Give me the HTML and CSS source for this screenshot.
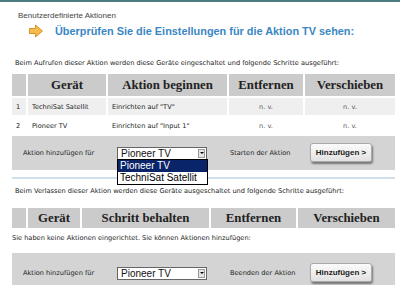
FILE: index.html
```html
<!DOCTYPE html>
<html>
<head>
<meta charset="utf-8">
<link rel="stylesheet" href="styles.css">
</head>
<body>
<div class="topline"></div>
<div class="page">
  <div class="crumb">Benutzerdefinierte Aktionen</div>
  <div class="title">
    <svg class="arrow" width="16" height="14" viewBox="0 0 16 14">
      <path d="M1.5 4.5 H7.5 V1 L14.5 7 L7.5 13 V9.5 H1.5 Z" fill="#f6bb4a" stroke="#d8922a" stroke-width="1" stroke-linejoin="round"/>
    </svg>
    <h1>Überprüfen Sie die Einstellungen für die Aktion TV sehen:</h1>
  </div>

  <p class="note first">Beim Aufrufen dieser Aktion werden diese Geräte eingeschaltet und folgende Schritte ausgeführt:</p>
  <div class="grid g1">
    <div class="hd"></div>
    <div class="hd">Gerät</div>
    <div class="hd">Aktion beginnen</div>
    <div class="hd">Entfernen</div>
    <div class="hd">Verschieben</div>

    <div class="cell odd">1</div>
    <div class="cell odd">TechniSat Satellit</div>
    <div class="cell odd">Einrichten auf "TV"</div>
    <div class="cell odd c">n. v.</div>
    <div class="cell odd c">n. v.</div>

    <div class="cell">2</div>
    <div class="cell">Pioneer TV</div>
    <div class="cell">Einrichten auf "Input 1"</div>
    <div class="cell c">n. v.</div>
    <div class="cell c">n. v.</div>
  </div>

  <div class="addbox">
    <span class="lbl">Aktion hinzufügen für</span>
    <div class="selwrap">
      <div class="select"><span>Pioneer TV</span><span class="dd"><i></i></span></div>
      <div class="list">
        <div class="opt on">Pioneer TV</div>
        <div class="opt">TechniSat Satellit</div>
      </div>
    </div>
    <span class="lbl2">Starten der Aktion</span>
    <button class="btn">Hinzufügen &gt;</button>
  </div>

  <div class="sep"></div>

  <p class="note second">Beim Verlassen dieser Aktion werden diese Geräte ausgeschaltet und folgende Schritte ausgeführt:</p>
  <div class="grid g2">
    <div class="hd"></div>
    <div class="hd">Gerät</div>
    <div class="hd">Schritt behalten</div>
    <div class="hd">Entfernen</div>
    <div class="hd">Verschieben</div>
  </div>
  <p class="note empty">Sie haben keine Aktionen eingerichtet. Sie können Aktionen hinzufügen:</p>

  <div class="addbox b2">
    <span class="lbl">Aktion hinzufügen für</span>
    <div class="selwrap">
      <div class="select"><span>Pioneer TV</span><span class="dd"><i></i></span></div>
    </div>
    <span class="lbl2">Beenden der Aktion</span>
    <button class="btn">Hinzufügen &gt;</button>
  </div>
</div>
</body>
</html>
```

FILE: styles.css
```css
html, body {
  margin: 0;
  padding: 0;
  background: #fff;
  overflow: hidden;
}
body {
  width: 400px;
  height: 285px;
  font-family: "Liberation Sans", Arial, sans-serif;
  color: #222;
}
.topline {
  height: 2px;
  background: #4d7c82;
}
.page {
  padding: 0 5px 0 12px;
}
.crumb {
  margin: 9px 0 0 6px;
  font-size: 8px;
  line-height: 10px;
  color: #444;
}
.title {
  display: flex;
  align-items: center;
  margin: 2px 0 0 16px;
  height: 16px;
}
.arrow {
  flex: none;
  margin-right: 11px;
}
h1 {
  margin: 0;
  font-size: 10.9px;
  font-weight: bold;
  color: #3a87c4;
  white-space: nowrap;
}
.note {
  margin: 0;
  font-family: "DejaVu Sans", sans-serif;
  font-size: 6.6px;
  line-height: 9px;
  color: #222;
  padding-left: 3px;
  white-space: nowrap;
}
.note.first { margin-top: 20px; }
.grid {
  display: grid;
  gap: 2px;
  margin-top: 6px;
}
.g1 { grid-template-columns: 14px 78px 119px 74px 90px; grid-auto-rows: 17px; grid-template-rows: 22px; }
.g2 { grid-template-columns: 14px 52px 127px 85px 97px; grid-template-rows: 20px; }
.hd {
  background: #cbcbcb;
  font-family: "Liberation Serif", serif;
  font-weight: bold;
  font-size: 12.8px;
  color: #222;
  display: flex;
  align-items: center;
  justify-content: center;
}
.cell {
  font-family: "DejaVu Sans", sans-serif;
  font-size: 6.6px;
  display: flex;
  align-items: center;
  padding-left: 4px;
  color: #222;
}
.cell.odd { background: #efefef; }
.cell.c { justify-content: center; padding-left: 0; color: #555; }
.addbox {
  display: flex;
  align-items: center;
  background: #d4d4d4;
  height: 34px;
  margin-top: 2px;
  padding-left: 11px;
  font-family: "DejaVu Sans", sans-serif;
  font-size: 6.6px;
  color: #222;
}
.lbl { width: 94px; flex: none; }
.lbl2 { width: 80px; flex: none; margin-left: 23px; }
.selwrap {
  position: relative;
  flex: none;
}
.select {
  box-sizing: border-box;
  width: 90px;
  height: 13px;
  background: #fff;
  border: 1px solid #666;
  display: flex;
  align-items: center;
  justify-content: space-between;
  font-family: "Liberation Sans", sans-serif;
  font-size: 10px;
  color: #111;
  padding-left: 3px;
}
.dd {
  width: 7px;
  height: 9px;
  margin-right: 1px;
  background: #e4e4e4;
  border: 1px solid #999;
  box-sizing: border-box;
  display: flex;
  align-items: center;
  justify-content: center;
}
.dd i {
  width: 0; height: 0;
  border-left: 2px solid transparent;
  border-right: 2px solid transparent;
  border-top: 2px solid #000;
}
.list {
  position: absolute;
  left: 0;
  top: 12px;
  width: 91px;
  box-sizing: border-box;
  border: 1px solid #000;
  background: #fff;
  font-family: "Liberation Sans", sans-serif;
  font-size: 10px;
  z-index: 2;
}
.opt {
  height: 12px;
  line-height: 12px;
  padding-left: 2px;
  color: #000;
}
.opt.on { background: #0a246a; color: #fff; }
.btn {
  flex: none;
  width: 62px;
  height: 19px;
  padding: 0;
  border: 1px solid #aaa;
  border-radius: 3px;
  background: linear-gradient(#fbfbfb, #e2e2e2);
  box-shadow: 1px 2px 2px rgba(0,0,0,0.45);
  font-family: "Liberation Sans", sans-serif;
  font-weight: bold;
  font-size: 8px;
  color: #222;
  margin-bottom: 2px;
}
.sep {
  height: 2px;
  background: #cfe0ea;
  margin-top: 7px;
}
.note.second { margin-top: 8px; }
.g2 { margin-top: 12px; }
.note.empty { padding-left: 0; margin-top: 6px; }
.b2 { margin-top: 10px; height: 40px; }
```
